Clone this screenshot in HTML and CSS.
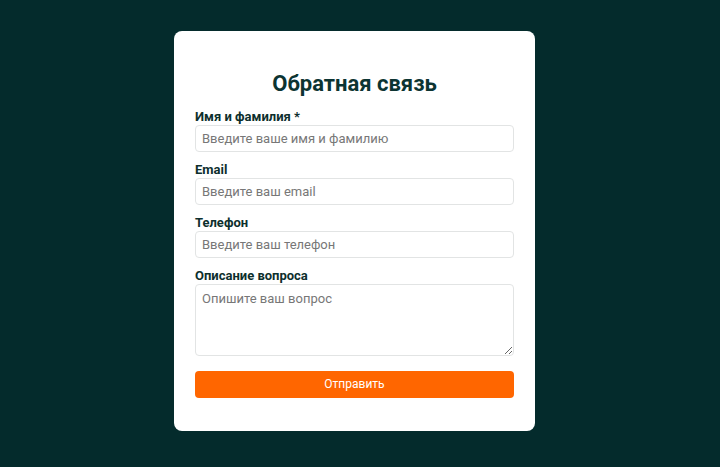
FILE: index.html
```html
<!DOCTYPE html>
<html lang="ru">
<head>
<meta charset="utf-8">
<title>Обратная связь</title>
<link rel="stylesheet" href="styles.css">
</head>
<body>
  <main class="page">
    <form class="card">
      <h1 class="card__title">Обратная связь</h1>
      <div class="field">
        <label class="field__label" for="name">Имя и фамилия *</label>
        <input class="field__input" id="name" type="text" placeholder="Введите ваше имя и фамилию">
      </div>
      <div class="field">
        <label class="field__label" for="email">Email</label>
        <input class="field__input" id="email" type="email" placeholder="Введите ваш email">
      </div>
      <div class="field">
        <label class="field__label" for="phone">Телефон</label>
        <input class="field__input" id="phone" type="tel" placeholder="Введите ваш телефон">
      </div>
      <div class="field field--last">
        <label class="field__label" for="question">Описание вопроса</label>
        <textarea class="field__input field__input--area" id="question" placeholder="Опишите ваш вопрос"></textarea>
      </div>
      <button class="card__submit" type="button">Отправить</button>
    </form>
  </main>
</body>
</html>
```
FILE: styles.css
```css
* {
  box-sizing: border-box;
}

html, body {
  margin: 0;
  height: 100%;
}

body {
  background: #042b2c;
  font-family: Roboto, "Noto Sans", sans-serif;
}

.page {
  min-height: 100%;
  display: flex;
  align-items: center;
  justify-content: center;
  padding: 0 11px 6px 0;
}

.card {
  width: 361px;
  background: #ffffff;
  border-radius: 8px;
  padding: 39px 21px 33px;
}

.card__title {
  margin: 0 0 11px;
  text-align: center;
  font-size: 22px;
  line-height: 28px;
  font-weight: 700;
  color: #0c3432;
}

.field {
  margin-bottom: 10px;
}

.field--last {
  margin-top: 1px;
  margin-bottom: 15px;
}

.field__label {
  display: block;
  font-size: 13px;
  line-height: 15px;
  font-weight: 700;
  color: #0d2f2d;
  margin-bottom: 1px;
}

.field__input {
  display: block;
  width: 100%;
  height: 27px;
  margin: 0;
  padding: 5px 6px;
  border: 1px solid #e2e4e4;
  border-radius: 4px;
  font-family: Roboto, "Noto Sans", sans-serif;
  font-size: 13px;
  line-height: 15px;
  color: #222;
  background: #fff;
}

.field__input::placeholder {
  color: #777;
}

.field__input--area {
  height: 72px;
  padding-top: 6px;
}

.card__submit {
  display: block;
  width: 100%;
  height: 27px;
  border: 0;
  border-radius: 4px;
  background: #ff6600;
  color: #ffffff;
  font-family: Roboto, "Noto Sans", sans-serif;
  font-size: 12px;
}
```
